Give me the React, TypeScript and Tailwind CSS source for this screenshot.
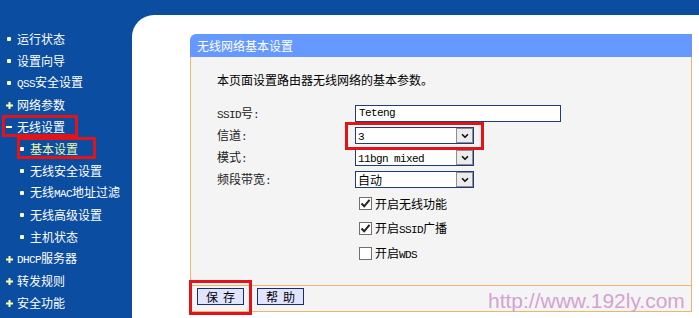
import React from 'react';
import { ChevronDown } from 'lucide-react';

type NavItem = {
  label: React.ReactNode;
  level: 0 | 1;
  mark: 'dot' | 'plus' | 'minus';
  active?: boolean;
  box?: 'group' | 'item';
};

const Ascii = ({ children }: { children: React.ReactNode }) => (
  <span className="font-['Liberation_Mono',monospace] text-[11px] tracking-[-0.6px]">{children}</span>
);

const navItems: NavItem[] = [
  { label: '运行状态', level: 0, mark: 'dot' },
  { label: '设置向导', level: 0, mark: 'dot' },
  { label: <><Ascii>QSS</Ascii>安全设置</>, level: 0, mark: 'dot' },
  { label: '网络参数', level: 0, mark: 'plus' },
  { label: '无线设置', level: 0, mark: 'minus', box: 'group' },
  { label: '基本设置', level: 1, mark: 'dot', active: true, box: 'item' },
  { label: '无线安全设置', level: 1, mark: 'dot' },
  { label: <>无线<Ascii>MAC</Ascii>地址过滤</>, level: 1, mark: 'dot' },
  { label: '无线高级设置', level: 1, mark: 'dot' },
  { label: '主机状态', level: 1, mark: 'dot' },
  { label: <><Ascii>DHCP</Ascii>服务器</>, level: 0, mark: 'plus' },
  { label: '转发规则', level: 0, mark: 'plus' },
  { label: '安全功能', level: 0, mark: 'plus' },
];

function Marker({ mark }: { mark: NavItem['mark'] }) {
  if (mark === 'dot') return <span className="w-[4px] h-[4px] rounded-[1px] bg-[#ffffcc]" />;
  if (mark === 'minus') return <span className="w-[6px] h-[2px] bg-[#ffffaa]" />;
  return (
    <svg width="7" height="7" viewBox="0 0 7 7">
      <rect x="0" y="2.5" width="7" height="2" fill="#ffffaa" />
      <rect x="2.5" y="0" width="2" height="7" fill="#ffffaa" />
    </svg>
  );
}

function Sidebar() {
  return (
    <nav className="w-[132px] shrink-0 pt-[28px] text-[12px] leading-none text-white">
      {navItems.map((item, i) => (
        <div
          key={i}
          className={`relative h-[22px] flex items-center ${item.level === 0 ? 'pl-[4px]' : 'pl-[17px]'}`}
        >
          <span className="w-[10px] flex justify-center">
            <Marker mark={item.mark} />
          </span>
          <span className={`ml-[3px] ${item.active ? 'text-[#eef5a6]' : ''}`}>{item.label}</span>
          {item.box === 'group' && (
            <span className="absolute left-[2px] top-[-1px] w-[76px] h-[22px] border-[3px] border-[#e3131b]" />
          )}
          {item.box === 'item' && (
            <span className="absolute left-[17px] top-[-1px] w-[79px] h-[22px] border-[3px] border-[#e3131b]" />
          )}
        </div>
      ))}
    </nav>
  );
}

function Select({ value }: { value: React.ReactNode }) {
  return (
    <div className="w-[119px] h-[17px] border border-[#1f3b78] bg-white flex items-center">
      <span className="flex-1 pl-[2px] leading-none">{value}</span>
      <span className="w-[17px] h-[15px] border border-[#8f8f8f] bg-[#ececec] flex items-center justify-center">
        <ChevronDown size={10} strokeWidth={4} color="#111" />
      </span>
    </div>
  );
}

function Checkbox({ checked }: { checked: boolean }) {
  return (
    <span className="w-[13px] h-[13px] border border-[#707070] bg-white flex items-center justify-center">
      {checked && (
        <svg width="11" height="11" viewBox="0 0 11 11">
          <path d="M1.5 5.5 L4.2 8.3 L9.5 1.8" fill="none" stroke="#222" strokeWidth="2" />
        </svg>
      )}
    </span>
  );
}

function FormRow({ label, children }: { label: React.ReactNode; children: React.ReactNode }) {
  return (
    <div className="flex items-center">
      <span className="w-[138px] text-[#222] leading-none">{label}</span>
      {children}
    </div>
  );
}

function Button({ a, b }: { a: string; b: string }) {
  return (
    <button className="w-[47px] h-[17px] border-[1.5px] border-[#1c2c6c] bg-[#e0e4ff] flex items-center justify-center text-[12px] leading-none text-black">
      <span>{a}</span>
      <span className="ml-[5px]">{b}</span>
    </button>
  );
}

export default function App() {
  return (
    <div className="relative w-[699px] h-[318px] overflow-hidden bg-[#0b4da0] flex font-['Noto_Sans_CJK_SC',sans-serif]">
      <Sidebar />

      <main className="flex-1 mt-[15px] bg-white rounded-tl-[22px] pl-[58px] pt-[19px]">
        <div className="w-[502px] text-[12px]">
          {/* Panel header */}
          <div className="h-[23px] bg-[#6699ff] rounded-tl-[6px] pl-[7px] flex items-center text-white leading-none">
            无线网络基本设置
          </div>

          {/* Panel body */}
          <div className="h-[229px] bg-[#f4f4f4] border-x border-b border-[#efb56f] pl-[26px] pt-[16px]">
            <p className="leading-[14px] text-black">本页面设置路由器无线网络的基本参数。</p>

            <div className="mt-[18px] flex flex-col gap-[5px]">
              <FormRow label={<><Ascii>SSID</Ascii>号<Ascii>:</Ascii></>}>
                <div className="w-[206px] h-[17px] border border-[#1f3b78] bg-white flex items-center pl-[3px]">
                  <Ascii>Teteng</Ascii>
                </div>
              </FormRow>
              <FormRow label={<>信道<Ascii>:</Ascii></>}>
                <div className="relative">
                  <Select value={<Ascii>3</Ascii>} />
                  <span className="absolute left-[-10px] top-[-5px] w-[139px] h-[28px] border-[3px] border-[#e3131b]" />
                </div>
              </FormRow>
              <FormRow label={<>模式<Ascii>:</Ascii></>}>
                <Select value={<Ascii>11bgn mixed</Ascii>} />
              </FormRow>
              <FormRow label={<>频段带宽<Ascii>:</Ascii></>}>
                <Select value="自动" />
              </FormRow>
            </div>

            <div className="mt-[3px] ml-[142px] flex flex-col">
              <label className="h-[25px] flex items-center">
                <Checkbox checked />
                <span className="ml-[3px] leading-none">开启无线功能</span>
              </label>
              <label className="h-[25px] flex items-center">
                <Checkbox checked />
                <span className="ml-[3px] leading-none">开启<Ascii>SSID</Ascii>广播</span>
              </label>
              <label className="h-[25px] flex items-center">
                <Checkbox checked={false} />
                <span className="ml-[3px] leading-none">开启<Ascii>WDS</Ascii></span>
              </label>
            </div>
          </div>

          {/* Panel footer */}
          <div className="h-[26px] bg-[#f4f4f4] border-x border-b border-[#efb56f] pl-[6px] pt-[2px] flex gap-[13px]">
            <div className="relative">
              <Button a="保" b="存" />
              <span className="absolute left-[-8px] top-[-8px] w-[63px] h-[35px] border-[3px] border-[#e3131b]" />
            </div>
            <Button a="帮" b="助" />
          </div>
        </div>
      </main>

      {/* Watermark */}
      <span className="absolute left-[488px] top-[290px] text-[21px] leading-none font-['Liberation_Sans',Arial,sans-serif] text-[#d3a3d3]">
        http://www.192ly.com
      </span>
    </div>
  );
}
